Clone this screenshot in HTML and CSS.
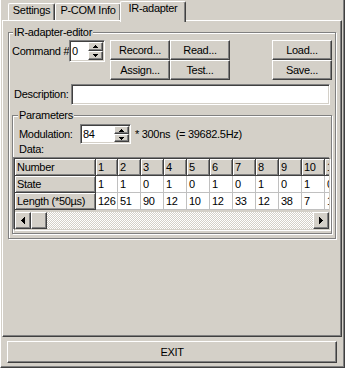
FILE: index.html
```html
<!DOCTYPE html>
<html>
<head>
<meta charset="utf-8">
<link rel="stylesheet" href="styles.css">
</head>
<body>
<div class="window">
  <div class="tabs">
    <div class="tab tab-settings">Settings</div>
    <div class="tab tab-pcom">P-COM Info</div>
    <div class="tab tab-active">IR-adapter</div>
  </div>
  <div class="panel">
    <div class="group outer-group">
      <div class="group-title">IR-adapter-editor</div>
      <div class="cmd-row">
        <span class="lbl cmd-lbl">Command #</span>
        <div class="sunken spin cmd-spin">
          <span class="spin-text">0</span>
          <div class="spin-btns">
            <div class="raised sbtn"><svg width="5" height="3" viewBox="0 0 5 3"><path d="M2 0h1v1h1v1h1v1H0V2h1V1h1z"/></svg></div>
            <div class="raised sbtn"><svg width="5" height="3" viewBox="0 0 5 3"><path d="M0 0h5v1H4v1H3v1H2V2H1V1H0z"/></svg></div>
          </div>
        </div>
        <div class="btn-grid">
          <button class="raised btn">Record...</button>
          <button class="raised btn">Read...</button>
          <button class="raised btn">Assign...</button>
          <button class="raised btn">Test...</button>
        </div>
        <div class="btn-col">
          <button class="raised btn">Load...</button>
          <button class="raised btn">Save...</button>
        </div>
      </div>
      <div class="desc-row">
        <span class="lbl desc-lbl">Description:</span>
        <div class="sunken field desc-field"></div>
      </div>
      <div class="group params-group">
        <div class="group-title">Parameters</div>
        <div class="mod-row">
          <span class="lbl mod-lbl">Modulation:</span>
          <div class="sunken spin mod-spin">
            <span class="spin-text">84</span>
            <div class="spin-btns">
              <div class="raised sbtn"><svg width="5" height="3" viewBox="0 0 5 3"><path d="M2 0h1v1h1v1h1v1H0V2h1V1h1z"/></svg></div>
              <div class="raised sbtn"><svg width="5" height="3" viewBox="0 0 5 3"><path d="M0 0h5v1H4v1H3v1H2V2H1V1H0z"/></svg></div>
            </div>
          </div>
          <span class="lbl unit">* 300ns  (= 39682.5Hz)</span>
        </div>
        <div class="lbl data-lbl">Data:</div>
        <div class="grid-frame">
          <div class="grid-clip">
            <div class="grid">
              <div class="cell fixed">Number</div>
              <div class="cell fixed">1</div>
              <div class="cell fixed">2</div>
              <div class="cell fixed">3</div>
              <div class="cell fixed">4</div>
              <div class="cell fixed">5</div>
              <div class="cell fixed">6</div>
              <div class="cell fixed">7</div>
              <div class="cell fixed">8</div>
              <div class="cell fixed">9</div>
              <div class="cell fixed">10</div>
              <div class="cell fixed">11</div>

              <div class="cell fixed">State</div>
              <div class="cell">1</div>
              <div class="cell">1</div>
              <div class="cell">0</div>
              <div class="cell">1</div>
              <div class="cell">0</div>
              <div class="cell">1</div>
              <div class="cell">0</div>
              <div class="cell">1</div>
              <div class="cell">0</div>
              <div class="cell">1</div>
              <div class="cell">0</div>

              <div class="cell fixed">Length (*50µs)</div>
              <div class="cell">126</div>
              <div class="cell">51</div>
              <div class="cell">90</div>
              <div class="cell">12</div>
              <div class="cell">10</div>
              <div class="cell">12</div>
              <div class="cell">33</div>
              <div class="cell">12</div>
              <div class="cell">38</div>
              <div class="cell">7</div>
              <div class="cell">12</div>
            </div>
          </div>
          <div class="grid-gap"></div>
          <div class="hscroll">
            <div class="raised sb-btn"><svg width="4" height="7" viewBox="0 0 4 7"><path d="M3 0h1v7H3V6H2V5H1V4H0V3h1V2h1V1h1z"/></svg></div>
            <div class="raised sb-thumb"></div>
            <div class="sb-track"></div>
            <div class="raised sb-btn"><svg width="4" height="7" viewBox="0 0 4 7"><path d="M0 0h1v1h1v1h1v1h1v1H3v1H2v1H1v1H0z"/></svg></div>
          </div>
        </div>
      </div>
    </div>
  </div>
  <button class="raised btn exit">EXIT</button>
</div>
</body>
</html>
```

FILE: styles.css
```css
* {
  box-sizing: border-box;
}

body {
  margin: 0;
  background: #d4d0c8;
  font-family: "Liberation Sans", Arial, sans-serif;
  font-size: 11px;
  line-height: 13px;
  letter-spacing: -0.3px;
  color: #000;
}

.window {
  width: 345px;
  height: 368px;
  background: #d4d0c8;
  border-left: 1px solid #fff;
  border-right: 1px solid #404040;
  border-bottom: 1px solid #404040;
  box-shadow: inset -1px -1px 0 #808080;
  padding-left: 1px;
  display: flex;
  flex-direction: column;
}

/* 3D helpers */
.raised {
  background: #d4d0c8;
  border: 1px solid;
  border-color: #fff #404040 #404040 #fff;
  box-shadow: inset -1px -1px 0 #808080;
}

.sunken {
  border: 1px solid;
  border-color: #808080 #fff #fff #808080;
  box-shadow: inset 1px 1px 0 #404040, inset -1px -1px 0 #d4d0c8;
  padding: 1px;
}

/* Tabs */
.tabs {
  height: 20px;
  display: flex;
  align-items: flex-end;
  padding-left: 6px;
}

.tab {
  height: 17px;
  border-top: 1px solid #fff;
  border-left: 1px solid #fff;
  border-right: 1px solid #404040;
  border-radius: 2px 2px 0 0;
  box-shadow: inset -1px 0 0 #808080;
  text-align: center;
  white-space: nowrap;
}

.tab-settings {
  width: 47px;
}

.tab-pcom {
  width: 66px;
}

.tab-active {
  width: 66px;
  height: 21px;
  margin-left: -1px;
  margin-bottom: -2px;
  background: #d4d0c8;
  position: relative;
  z-index: 1;
}

/* Panel */
.panel {
  width: 340px;
  height: 317px;
  border: 1px solid;
  border-color: #fff #404040 #404040 #fff;
  box-shadow: inset -1px -1px 0 #808080;
  padding: 11px 0 0 5px;
}

.group {
  border: 1px solid #808080;
  box-shadow: 1px 1px 0 #fff, inset 1px 1px 0 #fff;
  display: flex;
  flex-direction: column;
}

.group-title {
  align-self: flex-start;
  margin-top: -7px;
  margin-left: 1px;
  padding: 0 1px;
  background: #d4d0c8;
  white-space: nowrap;
}

.outer-group {
  width: 328px;
  padding: 0 3px 4px 3px;
}

.lbl {
  white-space: pre;
}

/* Command row */
.cmd-row {
  margin-top: 1px;
  display: flex;
  align-items: flex-start;
}

.cmd-lbl {
  width: 57px;
  margin-top: 5px;
}

.spin {
  display: flex;
  background: #fff;
}

.spin-text {
  flex: 1;
  padding-left: 1px;
  display: flex;
  align-items: center;
}

.spin-btns {
  width: 15px;
  display: flex;
  flex-direction: column;
}

.sbtn {
  flex: 1;
  display: flex;
  align-items: center;
  justify-content: center;
}

.sbtn svg,
.sb-btn svg {
  display: block;
  fill: #000;
  shape-rendering: crispEdges;
}

.cmd-spin {
  width: 36px;
  height: 22px;
}

.btn {
  font: inherit;
  letter-spacing: inherit;
  color: #000;
  padding: 0;
  margin: 0;
  line-height: 16px;
  text-align: center;
}

.btn-grid {
  margin-left: 5px;
  display: grid;
  grid-template-columns: 60px 60px;
  grid-auto-rows: 20px;
}

.btn-col {
  margin-left: auto;
  display: grid;
  grid-template-columns: 60px;
  grid-auto-rows: 20px;
}

/* Description row */
.desc-row {
  margin-top: 4px;
  display: flex;
  align-items: center;
}

.desc-lbl {
  margin-left: 2px;
}

.field {
  background: #fff;
}

.desc-field {
  width: 259px;
  height: 21px;
  margin-left: auto;
  margin-right: 2px;
}

/* Parameters */
.params-group {
  margin-top: 10px;
  padding-bottom: 3px;
}

.params-group .group-title {
  margin-left: 5px;
}

.mod-row {
  margin-top: 2px;
  display: flex;
  align-items: center;
}

.mod-lbl {
  width: 67px;
  padding-left: 6px;
}

.mod-spin {
  width: 51px;
  height: 20px;
}

.unit {
  margin-left: 4px;
}

.data-lbl {
  margin-top: -1px;
  padding-left: 6px;
}

.grid-frame {
  margin: 2px 1px 0 1px;
  border: 1px solid;
  border-color: #404040 #d4d0c8 #d4d0c8 #404040;
  box-shadow: -1px -1px 0 #808080, 1px 1px 0 #fff;
  background: #d4d0c8;
}

.grid-clip {
  height: 51px;
  overflow: hidden;
}

.grid {
  display: grid;
  grid-template-columns: 81px 22px repeat(10, 23px);
  grid-auto-rows: 17px;
  width: max-content;
}

.cell {
  background: #fff;
  border-right: 1px solid #c0c0c0;
  border-bottom: 1px solid #c0c0c0;
  padding-left: 2px;
  line-height: 16px;
  white-space: nowrap;
  overflow: hidden;
}

.cell.fixed {
  background: #d4d0c8;
  border-right-color: #404040;
  border-bottom-color: #404040;
  box-shadow: inset 1px 1px 0 #fff, inset -1px -1px 0 #808080;
}

.grid-gap {
  height: 2px;
}

.hscroll {
  height: 17px;
  display: flex;
}

.sb-btn {
  width: 16px;
  display: flex;
  align-items: center;
  justify-content: center;
}

.sb-thumb {
  width: 16px;
}

.sb-track {
  flex: 1;
  background-color: #d4d0c8;
  background-image: repeating-conic-gradient(#fff 0 25%, #d4d0c8 0 50%);
  background-size: 2px 2px;
}

/* Exit */
.exit {
  width: 330px;
  height: 22px;
  margin-top: 4px;
  margin-left: 5px;
  line-height: 20px;
}
```
